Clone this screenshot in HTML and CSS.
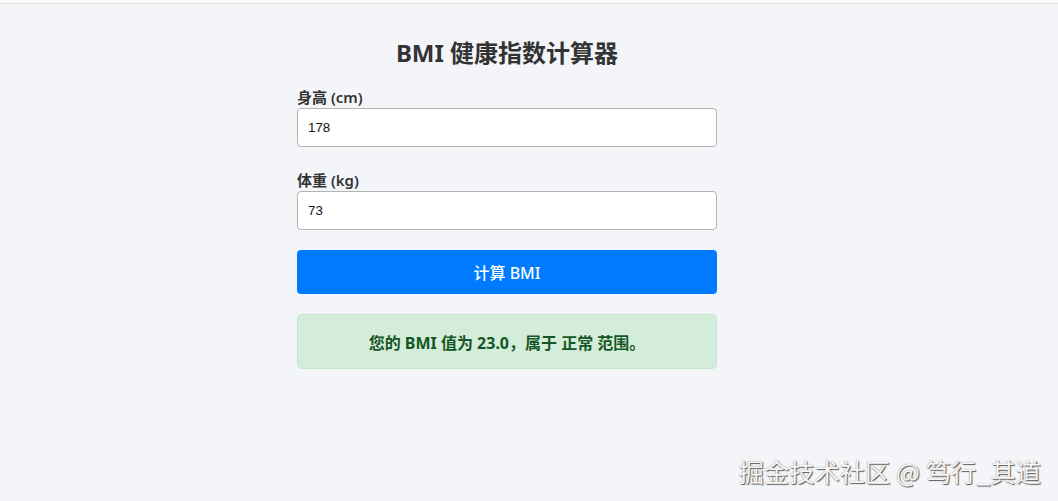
FILE: index.html
```html
<!DOCTYPE html>
<html lang="zh-CN">
<head>
<meta charset="utf-8">
<title>BMI 健康指数计算器</title>
<link rel="stylesheet" href="styles.css">
</head>
<body>
<div class="topbar"></div>
<div class="page">
  <div class="calc">
    <h2 class="title">BMI 健康指数计算器</h2>
    <div class="field">
      <label class="label" for="h">身高 <span class="unit">(cm)</span></label>
      <input class="input" id="h" type="text" value="178">
    </div>
    <div class="field field-last">
      <label class="label" for="w">体重 <span class="unit">(kg)</span></label>
      <input class="input" id="w" type="text" value="73">
    </div>
    <button class="btn" type="button">计算 BMI</button>
    <div class="result">您的 BMI 值为 23.0，属于 正常 范围。</div>
  </div>
</div>
<div class="watermark">掘金技术社区 @ 笃行_其道</div>
</body>
</html>
```

FILE: styles.css
```css
html, body {
  margin: 0;
  padding: 0;
}
body {
  background: #f4f5f9;
  font-family: "Noto Sans", "Noto Sans CJK SC", sans-serif;
  color: #333;
  height: 501px;
  overflow: hidden;
  position: relative;
}
.topbar {
  height: 3px;
  background: #fbfbfc;
  border-bottom: 1px solid #e4e5e8;
}
.page {
  display: flex;
  justify-content: center;
  padding-right: 44px;
  padding-top: 33px;
}
.calc {
  width: 420px;
  display: flex;
  flex-direction: column;
}
.title {
  margin: 0 0 18px;
  font-size: 24px;
  line-height: 32px;
  font-weight: 700;
  text-align: center;
  color: #333;
}
.field {
  display: flex;
  flex-direction: column;
  margin-bottom: 23px;
}
.field-last {
  margin-bottom: 20px;
}
.label {
  font-size: 15px;
  line-height: 20px;
  font-weight: 700;
  color: #333;
  margin-bottom: 1px;
}
.unit {
  font-weight: 600;
}
.input {
  box-sizing: border-box;
  height: 39px;
  padding: 0 10px;
  border: 1px solid #b3b3b3;
  border-radius: 4px;
  background: #fff;
  font-family: "Liberation Sans", Arial, sans-serif;
  font-size: 13.3px;
  color: #111;
  outline: none;
}
.btn {
  height: 44px;
  border: none;
  border-radius: 4px;
  background: #007bff;
  color: #fff;
  font-family: "Noto Sans", "Noto Sans CJK SC", sans-serif;
  font-size: 16px;
  font-weight: 500;
  cursor: pointer;
}
.result {
  box-sizing: border-box;
  margin-top: 20px;
  height: 55px;
  display: flex;
  align-items: center;
  justify-content: center;
  background: #d4edda;
  border: 1px solid #c3e6cb;
  border-radius: 5px;
  color: #155724;
  font-size: 16px;
  font-weight: 700;
}
.watermark {
  position: absolute;
  right: 17px;
  bottom: 14px;
  font-family: "Noto Sans CJK SC", sans-serif;
  font-size: 25.3px;
  line-height: 32px;
  color: #f7f7f7;
  text-shadow: 1px 1px 1px #5a5a5a, 0 0 1px #777;
}
```
